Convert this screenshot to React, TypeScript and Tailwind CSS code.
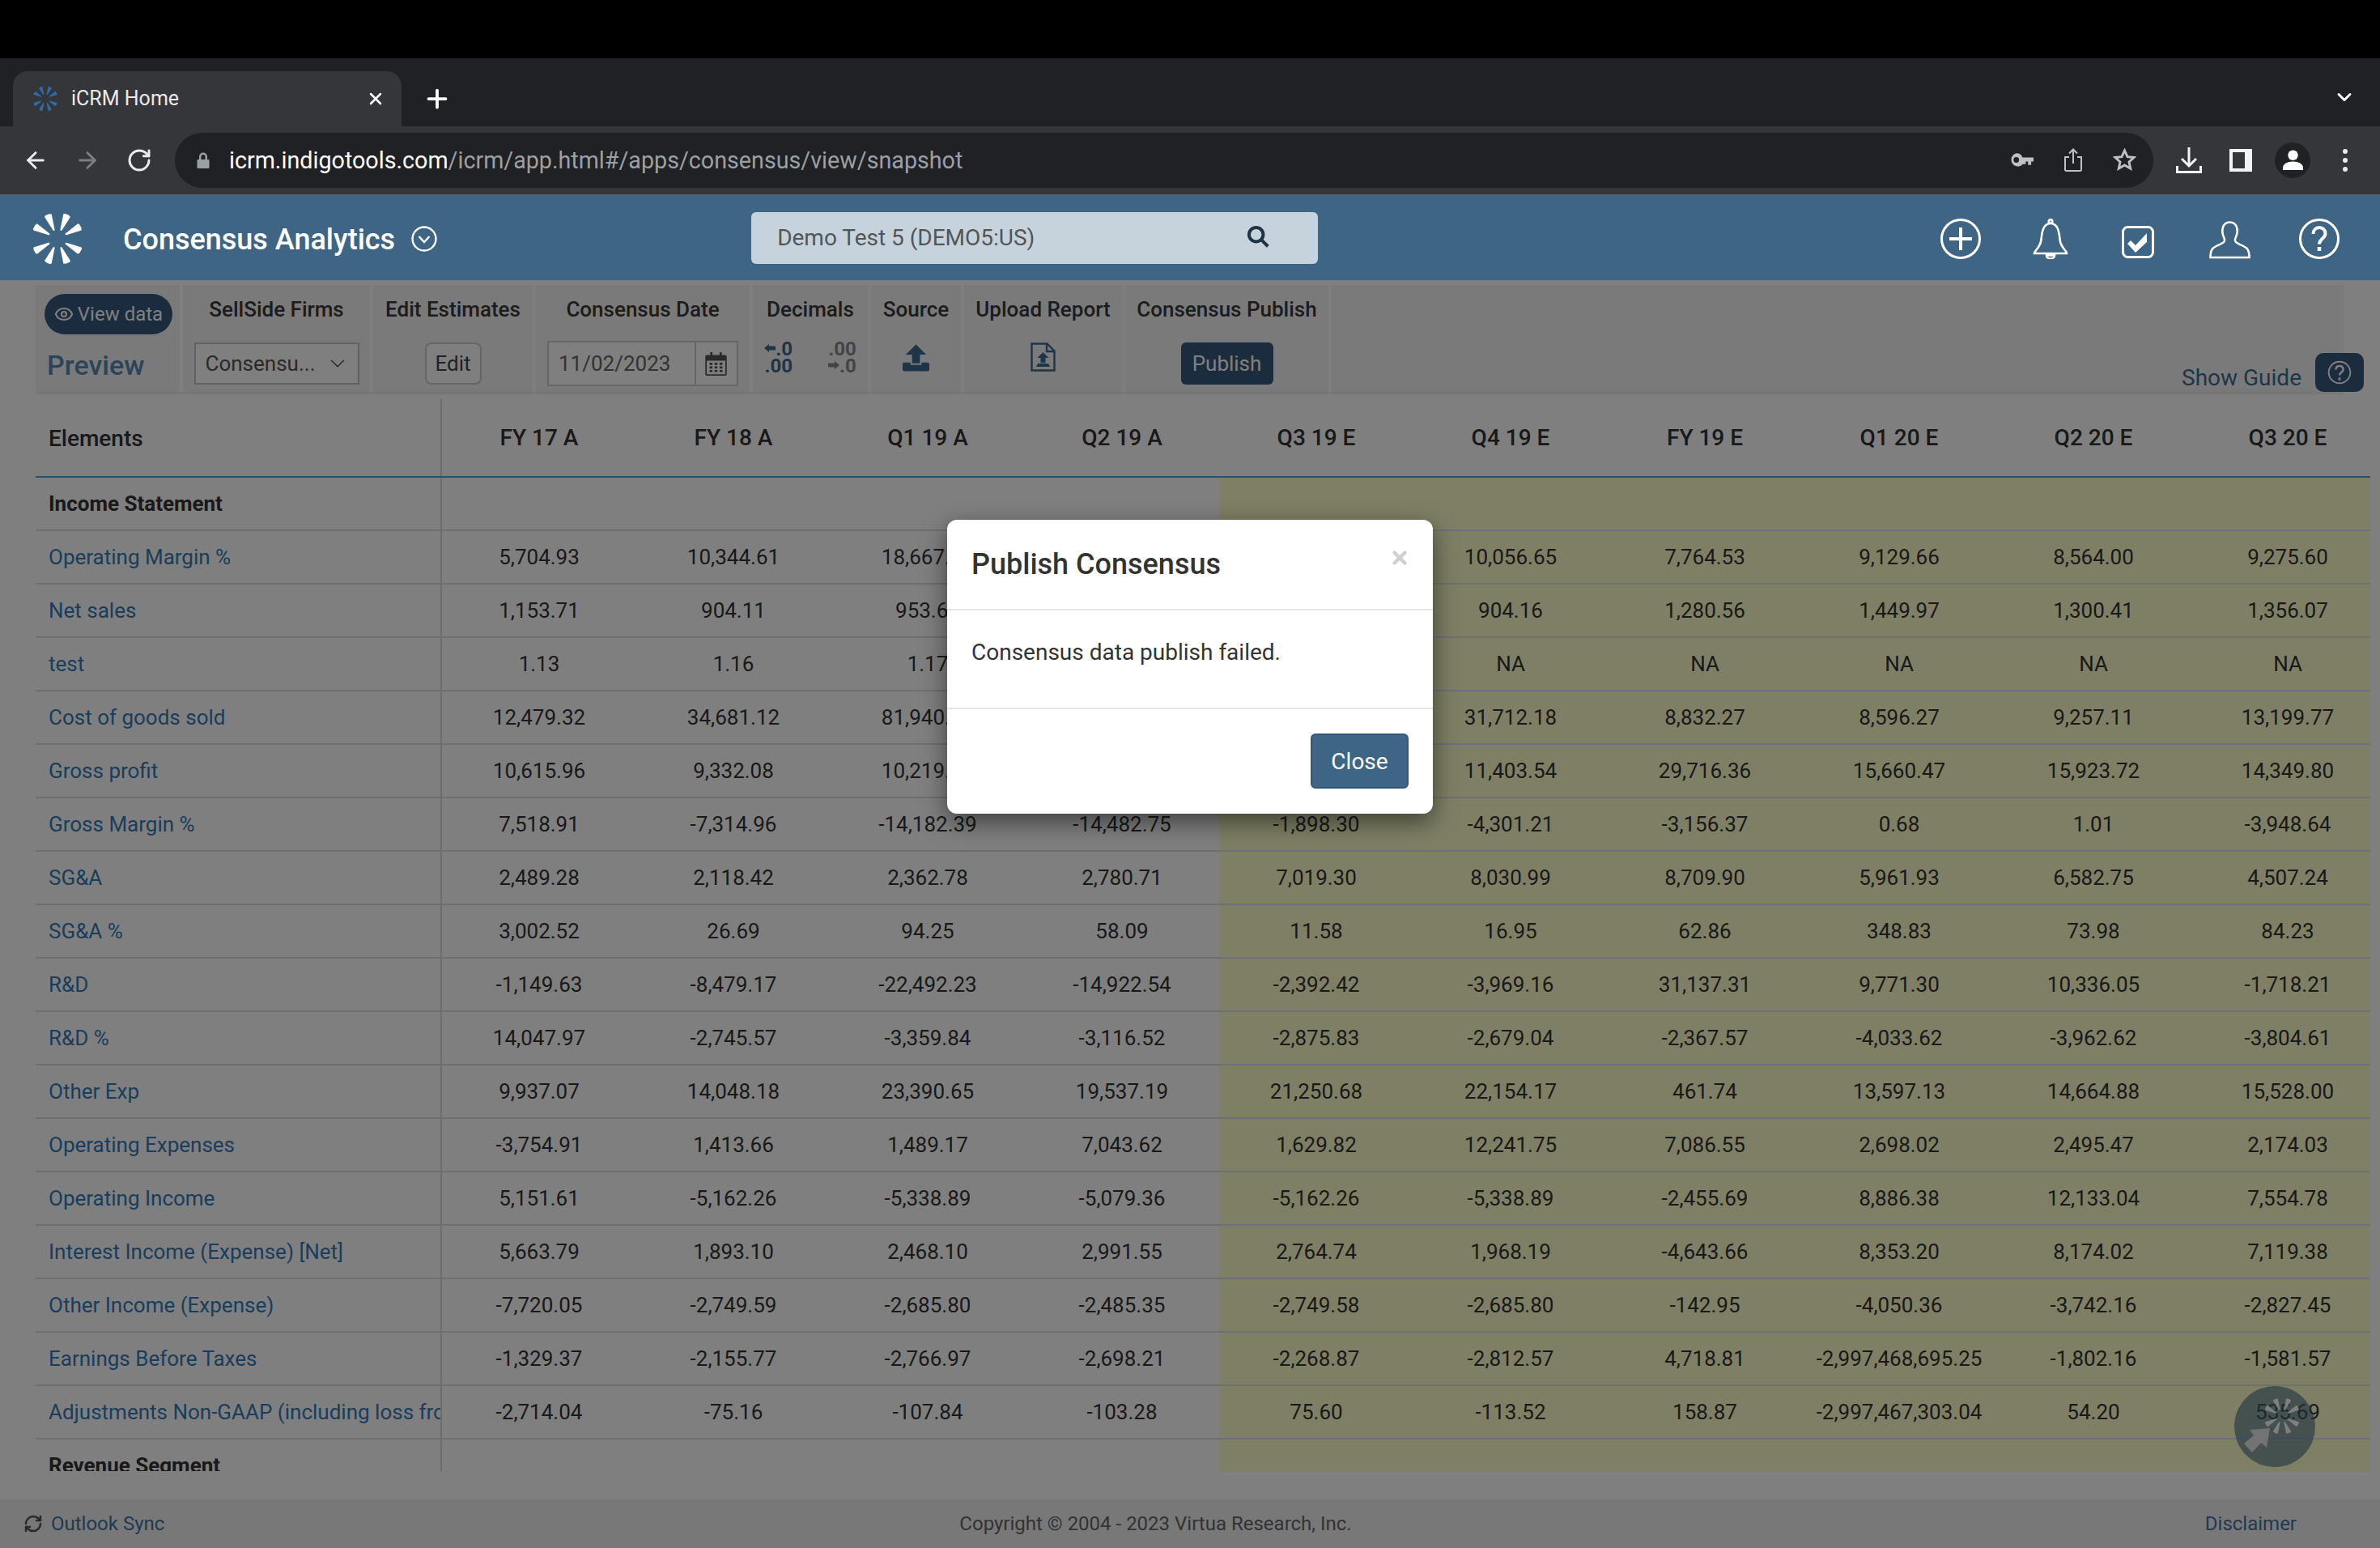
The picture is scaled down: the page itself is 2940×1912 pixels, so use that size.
import { ArrowLeft, ArrowRight, ChevronDown, Eye, Plus, RefreshCw, RotateCw, X } from "lucide-react";

const columns = ["FY 17 A", "FY 18 A", "Q1 19 A", "Q2 19 A", "Q3 19 E", "Q4 19 E", "FY 19 E", "Q1 20 E", "Q2 20 E", "Q3 20 E"];

const rows: { label: string; heading?: boolean; values: string[] }[] = [
  { label: "Income Statement", heading: true, values: [] },
  { label: "Operating Margin %", values: ["5,704.93", "10,344.61", "18,667.42", "12,904.17", "8,213.55", "10,056.65", "7,764.53", "9,129.66", "8,564.00", "9,275.60"] },
  { label: "Net sales", values: ["1,153.71", "904.11", "953.60", "1,102.36", "1,210.48", "904.16", "1,280.56", "1,449.97", "1,300.41", "1,356.07"] },
  { label: "test", values: ["1.13", "1.16", "1.17", "1.15", "NA", "NA", "NA", "NA", "NA", "NA"] },
  { label: "Cost of goods sold", values: ["12,479.32", "34,681.12", "81,940.27", "26,318.44", "19,402.76", "31,712.18", "8,832.27", "8,596.27", "9,257.11", "13,199.77"] },
  { label: "Gross profit", values: ["10,615.96", "9,332.08", "10,219.35", "11,046.28", "12,587.90", "11,403.54", "29,716.36", "15,660.47", "15,923.72", "14,349.80"] },
  { label: "Gross Margin %", values: ["7,518.91", "-7,314.96", "-14,182.39", "-14,482.75", "-1,898.30", "-4,301.21", "-3,156.37", "0.68", "1.01", "-3,948.64"] },
  { label: "SG&A", values: ["2,489.28", "2,118.42", "2,362.78", "2,780.71", "7,019.30", "8,030.99", "8,709.90", "5,961.93", "6,582.75", "4,507.24"] },
  { label: "SG&A %", values: ["3,002.52", "26.69", "94.25", "58.09", "11.58", "16.95", "62.86", "348.83", "73.98", "84.23"] },
  { label: "R&D", values: ["-1,149.63", "-8,479.17", "-22,492.23", "-14,922.54", "-2,392.42", "-3,969.16", "31,137.31", "9,771.30", "10,336.05", "-1,718.21"] },
  { label: "R&D %", values: ["14,047.97", "-2,745.57", "-3,359.84", "-3,116.52", "-2,875.83", "-2,679.04", "-2,367.57", "-4,033.62", "-3,962.62", "-3,804.61"] },
  { label: "Other Exp", values: ["9,937.07", "14,048.18", "23,390.65", "19,537.19", "21,250.68", "22,154.17", "461.74", "13,597.13", "14,664.88", "15,528.00"] },
  { label: "Operating Expenses", values: ["-3,754.91", "1,413.66", "1,489.17", "7,043.62", "1,629.82", "12,241.75", "7,086.55", "2,698.02", "2,495.47", "2,174.03"] },
  { label: "Operating Income", values: ["5,151.61", "-5,162.26", "-5,338.89", "-5,079.36", "-5,162.26", "-5,338.89", "-2,455.69", "8,886.38", "12,133.04", "7,554.78"] },
  { label: "Interest Income (Expense) [Net]", values: ["5,663.79", "1,893.10", "2,468.10", "2,991.55", "2,764.74", "1,968.19", "-4,643.66", "8,353.20", "8,174.02", "7,119.38"] },
  { label: "Other Income (Expense)", values: ["-7,720.05", "-2,749.59", "-2,685.80", "-2,485.35", "-2,749.58", "-2,685.80", "-142.95", "-4,050.36", "-3,742.16", "-2,827.45"] },
  { label: "Earnings Before Taxes", values: ["-1,329.37", "-2,155.77", "-2,766.97", "-2,698.21", "-2,268.87", "-2,812.57", "4,718.81", "-2,997,468,695.25", "-1,802.16", "-1,581.57"] },
  { label: "Adjustments Non-GAAP (including loss from", values: ["-2,714.04", "-75.16", "-107.84", "-103.28", "75.60", "-113.52", "158.87", "-2,997,467,303.04", "54.20", "535.69"] },
  { label: "Revenue Segment", heading: true, values: [] },
];

function Logo({ className, fill }: { className: string; fill: string }) {
  return (
    <svg viewBox="0 0 100 100" className={className} fill={fill}>
      {[22, 62, 118, 158, 202, 242, 298, 338].map((a) => (
        <polygon key={a} points="48.500,33 51.500,33 57,3 53,1 45,1 43,3" transform={`rotate(${a} 50 50)`} />
      ))}
    </svg>
  );
}

function ChromeBar() {
  return (
    <div className="shrink-0">
      <div className="h-[72px] bg-black" />
      <div className="flex h-[84px] items-end bg-[#202124] pl-[16px] text-white">
        <div className="flex h-[68px] w-[480px] items-center rounded-t-[18px] bg-[#35363a] pl-[24px] pr-[20px]">
          <Logo className="h-[32px] w-[32px]" fill="#2f6cab" />
          <span className="ml-[16px] text-[25px] text-[#e8eaed]">iCRM Home</span>
          <X className="ml-auto h-[24px] w-[24px]" strokeWidth={2.5} />
        </div>
        <Plus className="mb-[16px] ml-[26px] h-[36px] w-[36px]" strokeWidth={2.5} />
        <ChevronDown className="mb-[22px] ml-auto mr-[30px] h-[28px] w-[28px]" strokeWidth={2.5} />
      </div>
      <div className="flex h-[85px] items-center border-b-[1px] border-[#5a5b5e] bg-[#35363a] pb-[1px] pl-[28px] text-[#e8eaed]">
        <ArrowLeft className="h-[32px] w-[32px]" strokeWidth={2.2} />
        <ArrowRight className="ml-[32px] h-[32px] w-[32px] text-[#7d7e81]" strokeWidth={2.2} />
        <RotateCw className="ml-[32px] h-[32px] w-[32px]" strokeWidth={2.2} />
        <div className="ml-[28px] flex h-[68px] w-[2444px] items-center rounded-full bg-[#202124] pl-[27px] pr-[21px]">
          <svg viewBox="0 0 16 20" className="h-[22px] w-[16px]" fill="#9aa0a6">
            <path d="M3 9V5.500a5 5 0 0 1 10 0V9h1.500a1 1 0 0 1 1 1v9a1 1 0 0 1-1 1h-13a1 1 0 0 1-1-1v-9a1 1 0 0 1 1-1zm2.500 0h5V5.500a2.500 2.500 0 0 0-5 0z" />
          </svg>
          <span className="ml-[24px] mt-[1px] text-[28.7px] leading-none text-white">
            icrm.indigotools.com<span className="text-[#9aa0a6]">/icrm/app.html#/apps/consensus/view/snapshot</span>
          </span>
          <svg viewBox="0 0 30 17" className="ml-auto h-[17px] w-[29px]" fill="#bdc1c6">
            <path d="M8 0a8.500 8.500 0 0 1 8 5.500h14v5h-3V15h-4v-4.500h-3V14h-3.700A8.500 8.500 0 1 1 8 0zm0 5a3.500 3.500 0 1 0 0 7 3.500 3.500 0 0 0 0-7z" />
          </svg>
          <svg viewBox="0 0 22 29" className="ml-[38px] h-[29px] w-[22px]" fill="none" stroke="#bdc1c6" strokeWidth="2">
            <path d="M6 11H1v15.500A1.500 1.500 0 0 0 2.500 28h17a1.500 1.500 0 0 0 1.500-1.500V11h-5M11 19V1.500M6 6.500l5-5 5 5" />
          </svg>
          <svg viewBox="0 0 30 30" className="ml-[38px] h-[29px] w-[29px]" fill="none" stroke="#bdc1c6" strokeWidth="3">
            <path d="m15 3 3.600 8 8.400.9-6.300 5.700 1.800 8.400L15 21.700 7.500 26l1.800-8.400L3 11.900l8.400-.9z" />
          </svg>
        </div>
        <svg viewBox="0 0 32 32" className="ml-[28px] h-[32px] w-[32px]" fill="none" stroke="#f1f3f4" strokeWidth="3">
          <path d="M16 0v22M7 14l9 9 9-9M1.500 23v7.500h29V23" />
        </svg>
        <div className="ml-[34px] h-[28px] w-[28px] border-y-[4px] border-l-[4px] border-r-[9px] border-[#f1f3f4]" />
        <div className="ml-[28px] flex h-[44px] w-[44px] items-center justify-center rounded-full bg-[#202124]">
          <svg viewBox="0 0 26 26" className="h-[25px] w-[25px]" fill="#fff">
            <circle cx="13" cy="7" r="6.500" />
            <path d="M0 26v-3c0-5 6-8 13-8s13 3 13 8v3z" />
          </svg>
        </div>
        <div className="ml-[40px] flex flex-col gap-[5px]">
          <span className="h-[6px] w-[6px] rounded-full bg-[#e8eaed]" />
          <span className="h-[6px] w-[6px] rounded-full bg-[#e8eaed]" />
          <span className="h-[6px] w-[6px] rounded-full bg-[#e8eaed]" />
        </div>
      </div>
    </div>
  );
}

function AppHeader() {
  return (
    <div className="flex h-[105px] shrink-0 items-center bg-[#3e6583] pl-[38px] pt-[2px] text-white">
      <Logo className="h-[66px] w-[66px]" fill="#fff" />
      <span className="ml-[48px] mt-[2px] text-[36px] font-medium">Consensus Analytics</span>
      <svg viewBox="0 0 32 32" className="ml-[20px] h-[32px] w-[32px]" fill="none" stroke="#fff" strokeWidth="2.400">
        <circle cx="16" cy="16" r="14.500" />
        <path d="m9.500 13 6.500 7 6.500-7" />
      </svg>
      <div className="ml-[388px] flex h-[64px] w-[700px] -translate-y-[1px] items-center justify-between rounded-[6px] bg-[#c6d2dc] pl-[32px] pr-[60px] text-[28px] text-[#555]">
        <span>Demo Test 5 (DEMO5:US)</span>
        <svg viewBox="0 0 24 24" className="mb-[3px] h-[28px] w-[28px]" fill="none" stroke="#1f3345" strokeWidth="3.400">
          <circle cx="10" cy="10" r="7.500" />
          <path d="m15.500 15.500 7 7" />
        </svg>
      </div>
      <div className="ml-auto flex items-center pr-[50px]">
        <svg viewBox="0 0 50 50" className="h-[50px] w-[50px]" fill="none" stroke="#fff" strokeWidth="3">
          <circle cx="25" cy="25" r="23.500" />
          <path strokeWidth="4" d="M25 11v28M11 25h28" />
        </svg>
        <svg viewBox="0 0 44 50" className="ml-[64px] h-[50px] w-[44px]" fill="none" stroke="#fff" strokeWidth="2.600">
          <circle cx="22" cy="3.500" r="2.300" />
          <path d="M2 43c0-4 7-6 8.500-17C11.500 14 14 6 22 6s10.500 8 11.500 20C35 37 42 39 42 43zM17 45.500a5 4 0 0 0 10 0z" />
        </svg>
        <svg viewBox="0 0 40 40" className="ml-[66px] mt-[8px] h-[40px] w-[40px]" fill="none" stroke="#fff" strokeWidth="3">
          <rect x="1.500" y="1.500" width="37" height="37" rx="6" />
          <path fill="#fff" stroke="none" d="m7 22 4-4 6 6L31 9v11L17 33z" />
        </svg>
        <svg viewBox="0 0 52 48" className="ml-[68px] mt-[3px] h-[48px] w-[51px]" fill="none" stroke="#fff" strokeWidth="2.600">
          <path d="M1.500 46.500c0-12 4-13 13-17 5-2.500 6-4 4-8.500C15 14 16 2 26 2s11 12 7.500 19c-2 4.500-1 6 4 8.500 9 4 13 5 13 17z" />
        </svg>
        <svg viewBox="0 0 50 50" className="ml-[60px] h-[50px] w-[50px]" fill="none" stroke="#fff" strokeWidth="3">
          <circle cx="25" cy="25" r="23.500" />
          <path strokeWidth="4" d="M17.500 19c0-5 3.500-8 7.500-8s7.500 3 7.500 7.500c0 6-7.500 6.500-7.500 13" />
          <path strokeWidth="4.500" d="M25 35v5" />
        </svg>
      </div>
    </div>
  );
}

function ToolCell({ label, className, children }: { label: string; className: string; children: React.ReactNode }) {
  return (
    <div className={`flex flex-col items-center bg-[#f5f5f5] pt-[14px] ${className}`}>
      <span className="h-[32px] text-[26px] font-medium leading-[32px] text-[#383838]">{label}</span>
      <div className="mt-[25px] flex h-[52px] items-center">{children}</div>
    </div>
  );
}

function Toolbar() {
  return (
    <div className="ml-[44px] mt-[6px] flex h-[135px] w-[2851px] shrink-0 gap-[4px] border-b-[3px] border-[#eeeeee]">
      <div className="flex w-[178px] flex-col bg-[#f5f5f5] pl-[11px]">
        <div className="mt-[11px] flex h-[50px] w-[158px] items-center justify-center gap-[5px] rounded-full bg-[#35587a] text-[24px] text-white">
          <Eye className="h-[24px] w-[24px]" strokeWidth={2.2} />
          View data
        </div>
        <span className="ml-[3px] mt-[16px] text-[34px] font-medium leading-[44px] text-[#5589b3]">Preview</span>
      </div>
      <ToolCell label="SellSide Firms" className="w-[231px]">
        <div className="flex h-[52px] w-[204px] items-center justify-between border-[2px] border-[#c4c4c4] bg-white pl-[12px] pr-[10px] text-[26px] text-[#555]">
          Consensu...
          <ChevronDown className="h-[30px] w-[30px]" strokeWidth={1.3} />
        </div>
      </ToolCell>
      <ToolCell label="Edit Estimates" className="w-[197px]">
        <div className="flex h-[52px] w-[70px] items-center justify-center rounded-[8px] border-[2px] border-[#ccc] bg-white text-[26px] text-[#444]">Edit</div>
      </ToolCell>
      <ToolCell label="Consensus Date" className="w-[264px]">
        <div className="flex h-[56px] w-[236px] items-center border-[2px] border-[#ccc] bg-white text-[26px] text-[#666]">
          <span className="flex h-full w-[182px] items-center border-r-[2px] border-[#ccc] pl-[12px]">11/02/2023</span>
          <svg viewBox="0 0 30 34" className="ml-[11px] h-[30px] w-[27px]" fill="#555">
            <path d="M2 5h5V1h3v4h10V1h3v4h5a2 2 0 0 1 2 2v25a2 2 0 0 1-2 2H2a2 2 0 0 1-2-2V7a2 2 0 0 1 2-2zm0 8v19h26V13z" />
            <path d="M6 16h4v3H6zm7 0h4v3h-4zm7 0h4v3h-4zM6 21h4v3H6zm7 0h4v3h-4zm7 0h4v3h-4zM6 26h4v3H6zm7 0h4v3h-4zm7 0h4v3h-4z" />
          </svg>
        </div>
      </ToolCell>
      <ToolCell label="Decimals" className="w-[142px]">
        <div className="mb-[14px] flex gap-[44px] text-right text-[24px] font-bold leading-[21px]">
          <div className="text-[#3a6a92]">
            <div className="flex items-center justify-end">
              <svg viewBox="0 0 14 10" className="mb-[4px] h-[12px] w-[14px]" fill="#3a6a92"><path d="M0 5l6-5v2.500h8v5H6V10z" /></svg>
              .0
            </div>
            <div>.00</div>
          </div>
          <div className="text-[#888]">
            <div>.00</div>
            <div className="flex items-center justify-end">
              <svg viewBox="0 0 14 10" className="mb-[4px] h-[12px] w-[14px]" fill="#888"><path d="M14 5 8 0v2.500H0v5h8V10z" /></svg>
              .0
            </div>
          </div>
        </div>
      </ToolCell>
      <ToolCell label="Source" className="w-[111px]">
        <svg viewBox="0 0 34 34" className="mb-[14px] h-[34px] w-[33px]" fill="#3a6a92">
          <path d="M17 0 30 13h-8v11H12V13H4z" />
          <path d="M2 23h8v3h14v-3h8a2 2 0 0 1 2 2v7a2 2 0 0 1-2 2H2a2 2 0 0 1-2-2v-7a2 2 0 0 1 2-2z" />
        </svg>
      </ToolCell>
      <ToolCell label="Upload Report" className="w-[195px]">
        <svg viewBox="0 0 31 36" className="mb-[16px] h-[36px] w-[31px]" fill="none" stroke="#3a6a92" strokeWidth="2.400">
          <path d="M1.500 1.500h19l9 9v24h-28zM20 2v9h9" />
          <path fill="#3a6a92" stroke="none" d="M15.500 12l7 7h-4v6h-6v-6h-4zM9 26h13l2 4H7z" />
        </svg>
      </ToolCell>
      <ToolCell label="Consensus Publish" className="w-[251px]">
        <div className="flex h-[52px] w-[114px] items-center justify-center rounded-[6px] bg-[#35587a] text-[26px] text-white">Publish</div>
      </ToolCell>
      <div className="flex flex-1 items-end justify-end bg-[#f5f5f5]">
        <span className="-mb-[4px] text-[28px] text-[#3d6c93]">Show Guide</span>
        <div className="-mr-[25px] ml-[17px] flex h-[48px] w-[60px] items-center justify-center rounded-[10px] bg-[#35587a]">
          <svg viewBox="0 0 36 40" className="h-[38px] w-[32px]" fill="none" stroke="#fff" strokeWidth="2.200">
            <circle cx="18" cy="20" r="15" />
            <path strokeWidth="3" d="M13 16c0-3 2-5 5-5s5 2 5 5c0 4-5 4-5 8M18 27v4" />
          </svg>
        </div>
      </div>
    </div>
  );
}

function DataTable() {
  return (
    <div className="ml-[44px] h-[1330px] w-[2884px] shrink-0 overflow-hidden text-[26px] text-[#333]">
      <div className="flex h-[103px] w-[2902px] border-b-[2px] border-[#5f9fcf] text-[28px] font-medium">
        <div className="mt-[5px] flex w-[502px] shrink-0 items-center border-r-[2px] border-[#ddd] pl-[16px] pt-[3px]">Elements</div>
        {columns.map((c) => (
          <div key={c} className="flex w-[240px] shrink-0 items-center justify-center pt-[6px]">{c}</div>
        ))}
      </div>
      {rows.map((row) => (
        <div key={row.label} className="flex h-[66px] w-[2902px]">
          <div className={`w-[502px] shrink-0 overflow-hidden whitespace-nowrap border-b-[2px] border-r-[2px] border-[#ddd] pl-[16px] leading-[64px] ${row.heading ? "font-bold text-[#333]" : "text-[#337ab7]"}`}>
            {row.label}
          </div>
          {Array.from({ length: 10 }).map((_, i) => (
            <div key={i} className={`flex w-[240px] shrink-0 items-center justify-center border-b-[2px] ${i >= 4 ? "border-[#dfe0ee] bg-[#fdffc8]" : "border-[#ddd]"}`}>
              {row.values[i]}
            </div>
          ))}
        </div>
      ))}
    </div>
  );
}

function PublishModal() {
  return (
    <div className="absolute left-[1170px] top-[296px] flex h-[363px] w-[600px] flex-col rounded-[12px] bg-white text-[#333] shadow-[0_10px_30px_rgba(0,0,0,0.5)]">
      <div className="flex h-[112px] items-center justify-between border-b-[2px] border-[#e5e5e5] pl-[30px] pr-[28px]">
        <span className="text-[36px] font-medium">Publish Consensus</span>
        <X className="mb-[16px] h-[26px] w-[26px] text-[#cfcfcf]" strokeWidth={4} />
      </div>
      <div className="h-[122px] border-b-[2px] border-[#e5e5e5] pl-[30px] pt-[32px] text-[28px] leading-[40px]">Consensus data publish failed.</div>
      <div className="flex flex-1 items-start justify-end pr-[30px] pt-[30px]">
        <div className="flex h-[68px] w-[121px] items-center justify-center rounded-[6px] border-[2px] border-[#35587a] bg-[#3e6583] pt-[1px] text-[28px] text-white">Close</div>
      </div>
    </div>
  );
}

export default function App() {
  return (
    <div className="flex h-[1912px] w-[2940px] flex-col overflow-hidden font-[Roboto,sans-serif]">
      <ChromeBar />
      <AppHeader />
      <div className="relative flex flex-1 flex-col bg-white">
        <Toolbar />
        <DataTable />
        <div className="mt-auto flex h-[60px] items-center bg-[#f0f0f0] pl-[29px] text-[24px]">
          <RefreshCw className="h-[24px] w-[24px] text-[#555]" strokeWidth={2.5} />
          <span className="ml-[10px] text-[#3f74a8]">Outlook Sync</span>
          <span className="ml-[982px] text-[#666]">Copyright © 2004 - 2023 Virtua Research, Inc.</span>
          <span className="ml-auto mr-[103px] text-[#3f74a8]">Disclaimer</span>
        </div>
        <div className="absolute left-[2760px] top-[1366px] h-[100px] w-[100px] rounded-full bg-[#3e6583]/60">
          <Logo className="absolute left-[36px] top-[14px] h-[46px] w-[46px]" fill="#ffffff" />
          <svg viewBox="0 0 32 30" className="absolute left-[12px] top-[52px] h-[30px] w-[32px]" fill="#e6e6e6">
            <path d="M32 0 28 24 21 18 10 30 0 19 12 9 7 2z" />
          </svg>
        </div>
        <div className="absolute inset-0 bg-black/50" />
        <PublishModal />
      </div>
    </div>
  );
}
